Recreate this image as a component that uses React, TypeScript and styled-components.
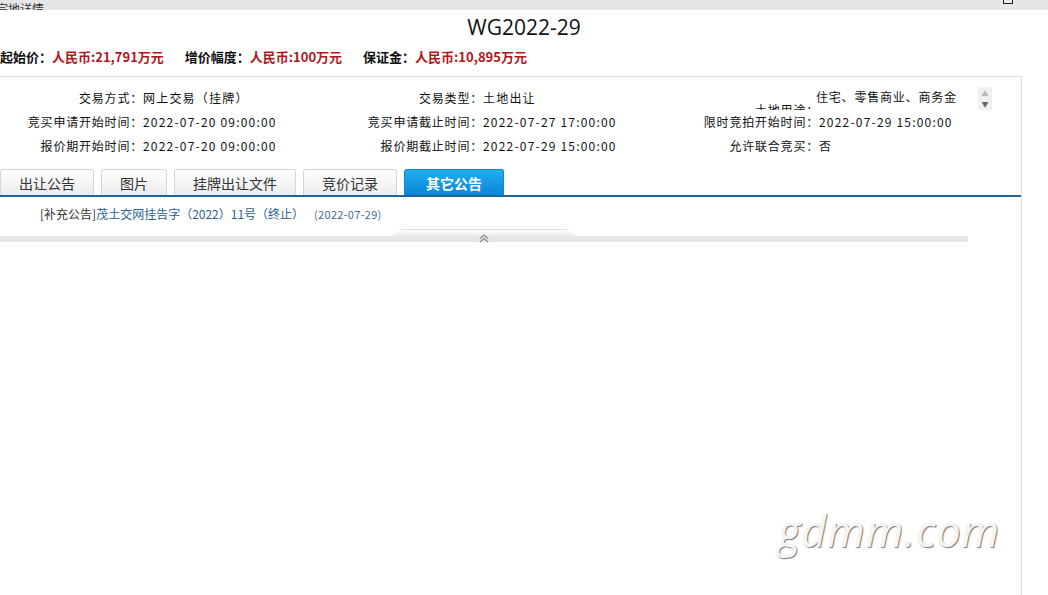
import React from 'react';
import styled, {createGlobalStyle} from "styled-components";

const GlobalStyle = createGlobalStyle`
  html, body {
    margin: 0;
    padding: 0;
    background: #fff;
  }
  body {
    font-family: "Noto Sans CJK SC", "Liberation Sans", sans-serif;
    color: #222;
  }
`;

const Page = styled.div`
  position: relative;
  min-height: 100vh;
  overflow: hidden;
`;

const WindowBar = styled.div`
  height: 10px;
  background: #e6e6e6;
  overflow: hidden;
  display: flex;
  justify-content: space-between;
  align-items: flex-end;
`;

const WindowTitle = styled.span`
  font-size: 12px;
  line-height: 12px;
  color: #333;
  margin-bottom: -5px;
  margin-left: -4px;
`;

const WindowButton = styled.span`
  width: 8px;
  height: 3px;
  border: 1px solid #222;
  border-top: none;
  margin: 0 35px 6px 0;
  align-self: flex-start;
`;

const Title = styled.h1`
  margin: 0;
  padding-top: 3px;
  height: 28px;
  text-align: center;
  font-family: "Open Sans", "Liberation Sans", sans-serif;
  font-size: 21px;
  font-weight: 400;
  line-height: 28px;
  color: #111;
`;

const PriceRow = styled.div`
  display: flex;
  gap: 21px;
  height: 30px;
  align-items: center;
  font-size: 13px;
  font-weight: 700;
`;

const PriceItem = styled.span`
  color: #111;
  white-space: nowrap;
`;

const PriceValue = styled.span`
  color: #b3161c;
`;

const Body = styled.div`
  width: 1021px;
  margin-top: 5px;
  border-top: 1px solid #ddd;
  border-right: 1px solid #ddd;
  min-height: 520px;
`;

const InfoGrid = styled.div`
  display: grid;
  grid-template-columns: 143px 197px 143px 193px 143px 180px;
  grid-auto-rows: 24px;
  padding-top: 9px;
  font-size: 12px;
  color: #111;
`;

const Label = styled.div<{$clipped?: boolean}>`
  text-align: right;
  line-height: ${p => p.$clipped ? "14px" : "24px"};
  letter-spacing: 0.8px;
  white-space: nowrap;
  overflow: hidden;
  padding-top: ${p => p.$clipped ? "17px" : "0"};
  box-sizing: border-box;
  height: 24px;
`;

const Value = styled.div`
  line-height: 24px;
  white-space: nowrap;
  letter-spacing: 1.2px;
`;

const UsageBox = styled.div`
  display: flex;
  height: 24px;
  margin-left: -3px;
`;

const UsageText = styled.div`
  flex: 0 0 148px;
  margin-right: 14px;
  height: 22px;
  line-height: 22px;
  overflow: hidden;
  letter-spacing: 0.8px;
  word-break: break-all;
`;

const ScrollArrows = styled.div`
  width: 14px;
  height: 23px;
  margin-top: 1px;
  background: #f0f0f0;
  display: flex;
  flex-direction: column;
  align-items: center;
  justify-content: space-around;
  font-size: 7px;
  line-height: 8px;
`;

const Arrow = styled.span<{$dark?: boolean}>`
  color: ${p => p.$dark ? "#666" : "#b8b8b8"};
`;

const TabBar = styled.div`
  display: flex;
  gap: 7px;
  margin-top: 11px;
  border-bottom: 2px solid #1f6498;
`;

const Tab = styled.div<{$active?: boolean}>`
  height: 26px;
  padding: 0 ${p => p.$active ? "21px" : "18px"};
  box-sizing: border-box;
  display: flex;
  align-items: center;
  font-size: 14px;
  border: 1px solid ${p => p.$active ? "#0c8ad6" : "#d6d6d6"};
  border-bottom: none;
  border-radius: 3px 3px 0 0;
  color: ${p => p.$active ? "#fff" : "#333"};
  font-weight: ${p => p.$active ? 700 : 400};
  background: ${p => p.$active
    ? "linear-gradient(#22aef0, #0a86d8)"
    : "linear-gradient(#ffffff, #ececec)"};
`;

const NoticeRow = styled.div`
  display: flex;
  align-items: baseline;
  padding: 8px 0 0 40px;
  height: 31px;
  box-sizing: border-box;
  font-size: 12px;
`;

const NoticeTag = styled.span`
  color: #333;
`;

const NoticeLink = styled.a`
  color: #2b5f93;
  text-decoration: none;
`;

const NoticeDate = styled.span`
  margin-left: 10px;
  font-size: 11px;
  color: #3f6c9c;
  letter-spacing: 0.3px;
`;

const CollapseBar = styled.div`
  width: 968px;
  height: 7px;
  display: flex;
  justify-content: center;
  border-top: 1px solid transparent;
  border-bottom: 6px solid #e6e6e6;
`;

const CollapseHandle = styled.div`
  position: relative;
  width: 188px;
  height: 7px;
  display: flex;
  justify-content: center;

  &::before {
    content: "";
    position: absolute;
    inset: 0;
    background: linear-gradient(#fdfdfd, #ececec);
    border-top: 1px solid #e0e0e0;
    clip-path: polygon(12px 0, 176px 0, 100% 100%, 0 100%);
  }
`;

const Chevron = styled.svg`
  position: relative;
  margin-top: 5px;
  flex: none;
`;

const Watermark = styled.div`
  position: absolute;
  left: 778px;
  top: 501px;
  font-family: "Open Sans", "DejaVu Sans", sans-serif;
  font-style: italic;
  font-size: 43px;
  letter-spacing: 1px;
  color: #f4f4f4;
  text-shadow: 1px 1px 1px #777, -1px -1px 0 #fff;
  pointer-events: none;
`;

const tabs = ["出让公告", "图片", "挂牌出让文件", "竞价记录", "其它公告"];

function App() {
    return (
        <Page>
            <GlobalStyle/>
            <WindowBar>
                <WindowTitle>宗地详情</WindowTitle>
                <WindowButton/>
            </WindowBar>
            <Title>WG2022-29</Title>
            <PriceRow>
                <PriceItem>起始价：<PriceValue>人民币:21,791万元</PriceValue></PriceItem>
                <PriceItem>增价幅度：<PriceValue>人民币:100万元</PriceValue></PriceItem>
                <PriceItem>保证金：<PriceValue>人民币:10,895万元</PriceValue></PriceItem>
            </PriceRow>
            <Body>
                <InfoGrid>
                    <Label>交易方式：</Label>
                    <Value>网上交易（挂牌）</Value>
                    <Label>交易类型：</Label>
                    <Value>土地出让</Value>
                    <Label $clipped>土地用途：</Label>
                    <UsageBox>
                        <UsageText>住宅、零售商业、商务金融用地</UsageText>
                        <ScrollArrows>
                            <Arrow>▲</Arrow>
                            <Arrow $dark>▼</Arrow>
                        </ScrollArrows>
                    </UsageBox>

                    <Label>竞买申请开始时间：</Label>
                    <Value>2022-07-20 09:00:00</Value>
                    <Label>竞买申请截止时间：</Label>
                    <Value>2022-07-27 17:00:00</Value>
                    <Label>限时竞拍开始时间：</Label>
                    <Value>2022-07-29 15:00:00</Value>

                    <Label>报价期开始时间：</Label>
                    <Value>2022-07-20 09:00:00</Value>
                    <Label>报价期截止时间：</Label>
                    <Value>2022-07-29 15:00:00</Value>
                    <Label>允许联合竞买：</Label>
                    <Value>否</Value>
                </InfoGrid>
                <TabBar>
                    {tabs.map((t, i) => (
                        <Tab key={t} $active={i === tabs.length - 1}>{t}</Tab>
                    ))}
                </TabBar>
                <NoticeRow>
                    <NoticeTag>[补充公告]</NoticeTag>
                    <NoticeLink href="#">茂土交网挂告字（2022）11号（终止）</NoticeLink>
                    <NoticeDate>(2022-07-29)</NoticeDate>
                </NoticeRow>
                <CollapseBar>
                    <CollapseHandle>
                        <Chevron width="10" height="9" viewBox="0 0 10 9">
                            <path d="M1 4.5 L5 1 L9 4.5 M1 8 L5 4.5 L9 8" fill="none" stroke="#8a8a8a" strokeWidth="1.1"/>
                        </Chevron>
                    </CollapseHandle>
                </CollapseBar>
            </Body>
            <Watermark>gdmm.com</Watermark>
        </Page>
    );
}

export default App;
